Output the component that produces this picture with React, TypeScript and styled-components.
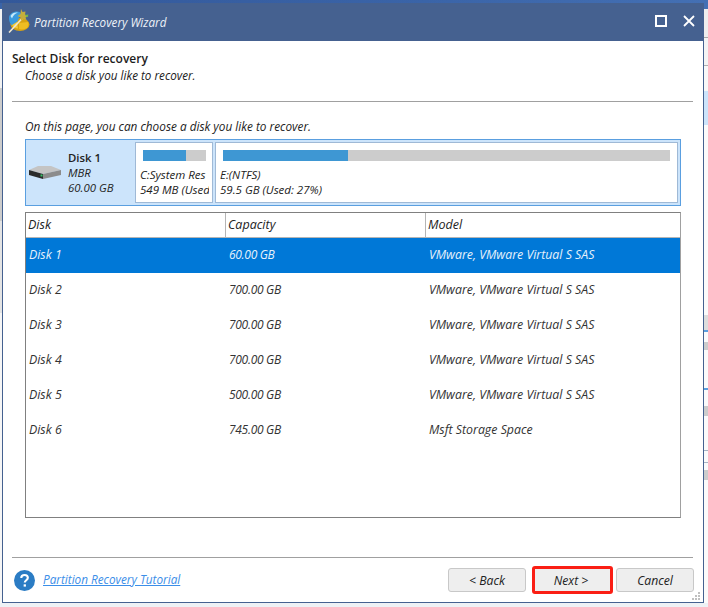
import styled, { createGlobalStyle } from "styled-components";

const GlobalStyle = createGlobalStyle`
  html, body {
    margin: 0;
    padding: 0;
    background: #eef1f5;
    overflow: hidden;
  }
`;

const disks = [
  { name: "Disk 1", capacity: "60.00 GB", model: "VMware, VMware Virtual S SAS" },
  { name: "Disk 2", capacity: "700.00 GB", model: "VMware, VMware Virtual S SAS" },
  { name: "Disk 3", capacity: "700.00 GB", model: "VMware, VMware Virtual S SAS" },
  { name: "Disk 4", capacity: "700.00 GB", model: "VMware, VMware Virtual S SAS" },
  { name: "Disk 5", capacity: "500.00 GB", model: "VMware, VMware Virtual S SAS" },
  { name: "Disk 6", capacity: "745.00 GB", model: "Msft Storage Space" },
];

function AppLogo() {
  return (
    <svg width="22" height="24" viewBox="0 0 22 24">
      <ellipse cx="12" cy="15.5" rx="9.5" ry="6.5" fill="#d8a312" />
      <path d="M1 9c0-4 4-6.5 8-6.5 2.5 0 4 1 4 3L9 13l-5 3.5C2 15 1 12 1 9z" fill="#3a9ade" />
      <path d="M2.5 7C4 4 7 3 10 3.5 7 4.5 5 6.5 4 9.5z" fill="#c4e8fa" />
      <path d="M4 16l5-3 1 6.5c-2.500 0-4.500-1.500-6-3.500z" fill="#f3cd3a" />
      <path d="M11 14l9-1c1 2 .5 5-2 6.500-2 1-5 1.300-7 .5z" fill="#efbd22" />
      <path d="M1 23.500L15 8.500" stroke="#eee7d2" strokeWidth="1.600" />
      <path d="M13 0l1.500 3 3-.5-.5 3 3.500 1.500-3 1.500 1 2.500-3.500-1-2 1.500-.5-3-3-1.500 3-2z" fill="#c4ae3c" />
      <path d="M17 6l3.500-.5-1.500 3z" fill="#6ebf4a" />
    </svg>
  );
}

function DiskIcon() {
  return (
    <svg width="32" height="13" viewBox="0 0 32 13">
      <path d="M0 4L9 0h13l10 4-18 4z" fill="#c4c4c4" />
      <path d="M0 4l14 4v5L0 9z" fill="#2b2b2b" />
      <path d="M14 8l18-4v5l-18 4z" fill="#8c8c8c" />
      <rect x="11.500" y="8.500" width="2" height="2" fill="#35c76a" />
    </svg>
  );
}

function HelpIcon() {
  return (
    <svg width="21" height="21" viewBox="0 0 22 22">
      <circle cx="11" cy="11" r="11" fill="#2b7cc4" />
      <path
        d="M7.600 8.400c0-2 1.500-3.200 3.500-3.200s3.400 1.200 3.400 2.900c0 2.600-3.200 2.600-3.200 5"
        fill="none"
        stroke="#fff"
        strokeWidth="2.200"
      />
      <rect x="10.100" y="15" width="2.400" height="2.400" fill="#fff" />
    </svg>
  );
}

export default function App() {
  return (
    <Desktop>
      <GlobalStyle />
      <LeftStrip />
      <Window>
        <TitleBar>
          <AppLogo />
          <TitleText>Partition Recovery Wizard</TitleText>
          <WindowControls>
            <svg width="12" height="12" viewBox="0 0 12 12">
              <rect x="1" y="1" width="10" height="10" fill="none" stroke="#fff" strokeWidth="2" />
            </svg>
            <svg width="12" height="12" viewBox="0 0 12 12">
              <path d="M1 1l10 10M11 1L1 11" stroke="#fff" strokeWidth="1.800" />
            </svg>
          </WindowControls>
        </TitleBar>

        <Body>
          <Header>
            <Heading>Select Disk for recovery</Heading>
            <SubHeading>Choose a disk you like to recover.</SubHeading>
          </Header>
          <Divider />

          <Intro>On this page, you can choose a disk you like to recover.</Intro>

          <DiskMap>
            <DiskSummary>
              <DiskIcon />
              <DiskInfo>
                <strong>Disk 1</strong>
                <span>MBR</span>
                <span>60.00 GB</span>
              </DiskInfo>
            </DiskSummary>
            <PartitionCard $width={78}>
              <UsageBar $used={68} $inset={3} />
              <PartitionText>C:System Res</PartitionText>
              <PartitionText>549 MB (Used</PartitionText>
            </PartitionCard>
            <PartitionCard $grow>
              <UsageBar $used={27.9} $inset={4} />
              <PartitionText>E:(NTFS)</PartitionText>
              <PartitionText>59.5 GB (Used: 27%)</PartitionText>
            </PartitionCard>
          </DiskMap>

          <Table>
            <HeaderRow>
              <HeaderCell>Disk</HeaderCell>
              <HeaderCell>Capacity</HeaderCell>
              <HeaderCell>Model</HeaderCell>
            </HeaderRow>
            {disks.map((disk, i) => (
              <Row key={disk.name} $selected={i === 0}>
                <Cell>{disk.name}</Cell>
                <Cell>{disk.capacity}</Cell>
                <Cell>{disk.model}</Cell>
              </Row>
            ))}
          </Table>

          <FooterDivider />

          <Footer>
            <HelpIcon />
            <TutorialLink href="#">Partition Recovery Tutorial</TutorialLink>
            <Buttons>
              <Button>&lt; Back</Button>
              <Button $highlight>Next &gt;</Button>
              <Button>Cancel</Button>
            </Buttons>
          </Footer>
        </Body>
        <ResizeGrip width="9" height="8" viewBox="0 0 9 8">
          <rect x="6" y="0" width="2" height="2" />
          <rect x="3" y="3" width="2" height="2" />
          <rect x="6" y="3" width="2" height="2" />
          <rect x="0" y="6" width="2" height="2" />
          <rect x="3" y="6" width="2" height="2" />
          <rect x="6" y="6" width="2" height="2" />
        </ResizeGrip>
      </Window>
      <RightStrip />
    </Desktop>
  );
}

const Desktop = styled.div`
  width: 708px;
  height: 607px;
  box-sizing: border-box;
  padding: 3px 0 4px;
  display: flex;
  background: linear-gradient(to right, #33589a, #3a64a8 60%, #4470b4) top / 100% 10px no-repeat, #eef1f5;
  font-family: "Open Sans", "Liberation Sans", sans-serif;
  font-style: italic;
  font-size: 12px;
  color: #222;
`;

const LeftStrip = styled.div`
  width: 2px;
  flex: none;
  background: linear-gradient(
    #3a64a8 0 6px,
    #f2f2f2 6px 85px,
    #cccccc 85px 218px,
    #e4e4e4 218px 310px,
    #f6f6f6 310px
  );
`;

const RightStrip = styled.div`
  width: 4px;
  flex: none;
  background: linear-gradient(
    #4470b4 0 6px,
    #eeeeee 6px 34px,
    #a8a8a8 34px 35px,
    #f4f4f4 35px 62px,
    #b0b0b0 62px 63px,
    #f8f8f8 63px 88px,
    #cce4fb 88px 122px,
    #fbfbfb 122px 312px,
    #dddddd 312px 327px,
    #5a9fe0 327px 329px,
    #fbfbfb 329px 339px,
    #cccccc 339px 347px,
    #fbfbfb 347px 385px,
    #5a9fe0 385px 387px,
    #fbfbfb 387px 403px,
    #cccccc 403px 413px,
    #fbfbfb 413px 447px,
    #a8b4c4 447px 448px,
    #fbfbfb 448px 459px,
    #a8b4c4 459px 460px,
    #fbfbfb 460px 467px,
    #cccccc 467px 477px,
    #fbfbfb 477px
  );
`;

const Window = styled.div`
  flex: 1;
  min-width: 0;
  position: relative;
  box-sizing: border-box;
  display: flex;
  flex-direction: column;
  background: #fff;
  border: 1px solid #456190;
  border-top: 0;
`;

const TitleBar = styled.div`
  height: 38px;
  flex: none;
  margin: 0 -1px;
  padding: 0 9px 2px 6px;
  box-sizing: border-box;
  display: flex;
  align-items: center;
  gap: 4px;
  background: #456190;
`;

const TitleText = styled.div`
  font-size: 11.7px;
  padding-top: 2px;
  color: #eef2f8;
`;

const WindowControls = styled.div`
  margin-left: auto;
  display: flex;
  align-items: center;
  gap: 16px;
`;

const Body = styled.div`
  flex: 1;
  min-height: 0;
  padding: 0 10px 0 9px;
  display: flex;
  flex-direction: column;
`;

const Header = styled.div`
  padding-top: 10px;
  height: 60px;
  flex: none;
  box-sizing: border-box;
`;

const Heading = styled.div`
  font-style: normal;
  font-weight: 600;
  font-size: 12px;
  line-height: 16px;
  color: #1d1d1d;
`;

const SubHeading = styled.div`
  padding-left: 13px;
  font-size: 11.7px;
  line-height: 16px;
`;

const Divider = styled.div`
  height: 1px;
  flex: none;
  background: #a0a0a0;
`;

const Intro = styled.div`
  margin: 16px 0 0 13px;
  font-size: 11.8px;
  line-height: 16px;
`;

const DiskMap = styled.div`
  margin: 5px 12px 0 13px;
  height: 67px;
  flex: none;
  box-sizing: border-box;
  display: flex;
  gap: 2px;
  padding: 2px;
  background: #cce4fb;
  border: 1px solid #5a9fe0;
`;

const DiskSummary = styled.div`
  width: 105px;
  flex: none;
  display: flex;
  align-items: center;
  padding-left: 1px;
  box-sizing: border-box;
  gap: 7px;
`;

const DiskInfo = styled.div`
  display: flex;
  flex-direction: column;
  font-size: 11.4px;
  line-height: 15px;

  strong {
    font-style: normal;
    font-weight: 600;
  }
`;

const PartitionCard = styled.div<{ $width?: number; $grow?: boolean }>`
  ${(p) => (p.$grow ? "flex: 1;" : `width: ${p.$width}px; flex: none;`)}
  min-width: 0;
  box-sizing: border-box;
  background: #fff;
  border: 1px solid #9fb9d6;
  padding: 7px 3px 0 4px;
`;

const UsageBar = styled.div<{ $used: number; $inset: number }>`
  height: 11px;
  margin: 0 ${(p) => p.$inset}px 6px 3px;
  background: linear-gradient(
    to right,
    #3e97d3 ${(p) => p.$used}%,
    #cccccc ${(p) => p.$used}%
  );
`;

const PartitionText = styled.div`
  font-size: 11.5px;
  line-height: 15px;
  white-space: nowrap;
  overflow: hidden;
`;

const Table = styled.div`
  margin: 6px 12px 0 13px;
  height: 306px;
  flex: none;
  box-sizing: border-box;
  border: 1px solid #808080;
  border-right-color: #a0a0a0;
`;

const columns = "200px 200px 1fr";

const HeaderRow = styled.div`
  display: grid;
  grid-template-columns: ${columns};
  height: 24px;
  border-bottom: 1px solid #b5b5b5;
`;

const HeaderCell = styled.div`
  padding-left: 2px;
  font-size: 12.5px;
  line-height: 24px;
  border-right: 1px solid #b5b5b5;
  &:last-child {
    border-right: 0;
  }
`;

const Row = styled.div<{ $selected?: boolean }>`
  display: grid;
  grid-template-columns: ${columns};
  height: 35px;
  box-sizing: border-box;
  padding-bottom: 2px;
  align-items: center;
  background: ${(p) => (p.$selected ? "#0078d7" : "transparent")};
  color: ${(p) => (p.$selected ? "#e6f1fb" : "#333")};
`;

const Cell = styled.div`
  padding-left: 3px;
  font-size: 12.35px;
  &:nth-child(2) {
    font-size: 12px;
    letter-spacing: -0.3px;
  }
`;

const FooterDivider = styled.div`
  height: 1px;
  flex: none;
  margin-top: 39px;
  background: #a0a0a0;
`;

const Footer = styled.div`
  flex: 1;
  display: flex;
  align-items: center;
  margin-right: -1px;
  padding-left: 2px;
  gap: 8px;
`;

const TutorialLink = styled.a`
  font-size: 11.75px;
  margin-bottom: 3px;
  color: #3b8ee8;
  text-decoration: underline;
`;

const Buttons = styled.div`
  margin-left: auto;
  display: flex;
  align-items: center;
  gap: 3px;
`;

const Button = styled.button<{ $highlight?: boolean }>`
  width: 78px;
  height: 24px;
  padding: 0;
  font: italic 12.2px "Open Sans", "Liberation Sans", sans-serif;
  color: #222;
  background: #eeeeee;
  border-radius: 3px;
  border: 1px solid #c8c8c8;
  ${(p) =>
    p.$highlight &&
    `
    width: 81px;
    height: 28px;
    margin-left: 3px;
    padding-right: 3px;
    border: 3px solid #fa1e14;
  `}
`;

const ResizeGrip = styled.svg`
  position: absolute;
  right: 2px;
  bottom: 2px;
  fill: #c0c0c0;
`;
